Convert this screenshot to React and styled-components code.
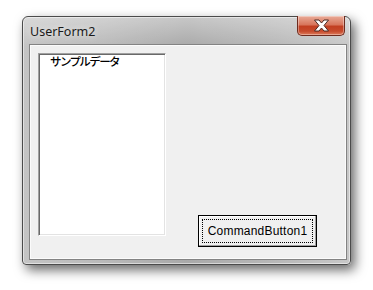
import React from 'react';
import styled, { createGlobalStyle } from 'styled-components';

const Global = createGlobalStyle`
  html, body {
    margin: 0;
    padding: 0;
    background: #ffffff;
  }
  body {
    width: 373px;
    height: 290px;
    overflow: hidden;
  }
`;

const Page = styled.div`
  display: flex;
  padding: 16px 0 0 22px;
`;

const Window = styled.div`
  box-sizing: border-box;
  width: 329px;
  height: 249px;
  display: flex;
  flex-direction: column;
  border: 1px solid #4b4b4b;
  border-radius: 6px 6px 4px 4px;
  background:
    linear-gradient(to bottom, rgba(255,255,255,0.35), rgba(255,255,255,0) 30px),
    linear-gradient(to right, #c4c4c4 0%, #b9b9b9 25%, #a9a9a9 50%, #b6b6b6 75%, #c8c8c8 100%);
  box-shadow: 0 0 0 1px rgba(255,255,255,0.5) inset, 4px 5px 12px rgba(0,0,0,0.6);
  padding: 0 3px 4px 6px;
`;

const TitleBar = styled.div`
  height: 27px;
  display: flex;
  justify-content: space-between;
  align-items: flex-start;
`;

const Title = styled.span`
  margin: 7px 0 0 1px;
  font-family: "Noto Sans", "Open Sans", sans-serif;
  font-size: 12.5px;
  line-height: 16px;
  color: #1a1a1a;
  text-shadow: 0 0 6px rgba(255,255,255,0.9);
`;

const CloseButton = styled.div`
  box-sizing: border-box;
  width: 48px;
  height: 20px;
  margin: -1px 2px 0 0;
  display: flex;
  align-items: center;
  justify-content: center;
  border: 1px solid #6e2b1e;
  border-top: none;
  border-radius: 0 0 5px 5px;
  background: linear-gradient(to bottom, #e9ab98 0%, #d8765d 45%, #c23f22 55%, #c64a2c 80%, #dd7c5c 100%);
  box-shadow: inset 0 0 0 1px rgba(255,255,255,0.35);
`;

const Client = styled.div`
  box-sizing: border-box;
  height: 216px;
  display: flex;
  align-items: flex-start;
  padding: 8px 0 0 8px;
  background: #f0f0f0;
  border: 1px solid #838383;
  box-shadow: inset 0 0 0 1px #fbfbfb;
`;

const ListBox = styled.div`
  box-sizing: border-box;
  width: 128px;
  height: 183px;
  background: #ffffff;
  border-top: 1px solid #a0a0a0;
  border-left: 1px solid #a0a0a0;
  border-right: 1px solid #ffffff;
  border-bottom: 1px solid #ffffff;
  box-shadow: inset 1px 1px 0 #696969, inset -1px -1px 0 #e3e3e3;
  padding: 1px 0 0 11px;
`;

const ListItem = styled.div`
  font-family: "Noto Sans CJK JP", sans-serif;
  font-size: 11.5px;
  font-weight: 500;
  letter-spacing: -1.6px;
  line-height: 13px;
  color: #000000;
`;

const ButtonArea = styled.div`
  flex: 1;
  align-self: stretch;
  display: flex;
  justify-content: flex-end;
  align-items: flex-end;
  padding: 0 29px 12px 0;
`;

const CommandButton = styled.button`
  box-sizing: border-box;
  width: 119px;
  height: 32px;
  padding: 3px;
  border: 1px solid #000000;
  background: #f0f0f0;
  box-shadow: inset -1px -1px 0 #a0a0a0, inset 1px 1px 0 #ffffff;
  display: flex;
`;

const FocusRect = styled.span`
  flex: 1;
  display: flex;
  align-items: center;
  justify-content: center;
  border: 1px dotted #000000;
  font-family: "Liberation Sans", Arial, sans-serif;
  font-size: 12px;
  letter-spacing: 0.2px;
  color: #000000;
`;

const CloseIcon = () => (
  <svg width="17" height="13" viewBox="0 0 17 13">
    <path
      d="M1.5 1 H6 L8.5 4 L11 1 H15.5 L11 6.5 L15.5 12 H11 L8.5 9 L6 12 H1.5 L6 6.5 Z"
      fill="#ffffff"
      stroke="#4a2a24"
      strokeWidth="1"
      strokeLinejoin="round"
    />
  </svg>
);

export default function App() {
  return (
    <>
      <Global />
      <Page>
        <Window>
          <TitleBar>
            <Title>UserForm2</Title>
            <CloseButton>
              <CloseIcon />
            </CloseButton>
          </TitleBar>
          <Client>
            <ListBox>
              <ListItem>サンプルデータ</ListItem>
            </ListBox>
            <ButtonArea>
              <CommandButton>
                <FocusRect>CommandButton1</FocusRect>
              </CommandButton>
            </ButtonArea>
          </Client>
        </Window>
      </Page>
    </>
  );
}
